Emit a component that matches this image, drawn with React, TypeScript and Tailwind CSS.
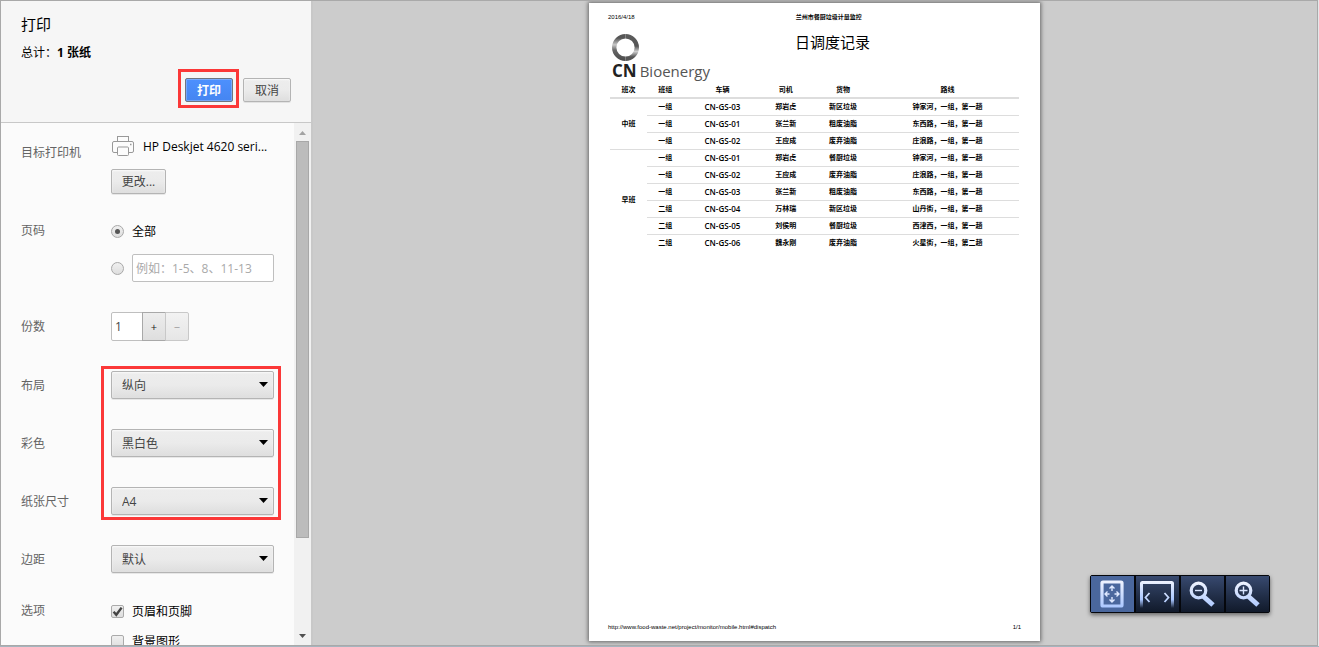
import React, { useState } from "react";

const FACE =
  "bg-linear-to-b from-[#ededed] via-[#ebebeb] to-[#dedede] border border-[#b4b4b4] rounded-[2px] text-[#444] shadow-[0_1px_0_rgba(0,0,0,0.08),inset_0_1px_2px_rgba(255,255,255,0.75)]";

function Field({
  label,
  htmlFor,
  children,
  labelClass = "leading-[30px]",
}: {
  label: string;
  htmlFor?: string;
  children: React.ReactNode;
  labelClass?: string;
}) {
  return (
    <div className="flex items-start">
      <label htmlFor={htmlFor} className={`-mb-1 w-[90px] shrink-0 text-[#646464] ${labelClass}`}>
        {label}
      </label>
      <div className="min-w-0 flex-1">{children}</div>
    </div>
  );
}

function SelectField({ id, label, options }: { id: string; label: string; options: string[] }) {
  return (
    <Field label={label} htmlFor={id}>
      <div className="relative">
        <select id={id} className={`block h-[28px] w-full appearance-none pt-[2px] pr-6 pl-[10px] ${FACE}`}>
          {options.map((o) => (
            <option key={o}>{o}</option>
          ))}
        </select>
        <svg
          viewBox="0 0 9 5"
          className="pointer-events-none absolute top-[11px] right-[6px] h-[5px] w-[9px]"
        >
          <path d="M0 0h9L4.5 5z" fill="#000" />
        </svg>
      </div>
    </Field>
  );
}

function Radio({ id, checked, onChange, label }: { id: string; checked: boolean; onChange: () => void; label?: string }) {
  return (
    <input
      type="radio"
      id={id}
      name="pages"
      aria-label={label}
      checked={checked}
      onChange={onChange}
      className="flex size-[13px] shrink-0 appearance-none items-center justify-center rounded-full border border-[#a8a8a8] bg-linear-to-b from-[#f0f0f0] to-[#dedede] checked:before:size-[5px] checked:before:rounded-full checked:before:bg-[#555] checked:before:content-['']"
    />
  );
}

function Check({ id, label, defaultChecked }: { id: string; label: string; defaultChecked?: boolean }) {
  return (
    <div className="flex h-4 items-center">
      <span className="relative flex size-[13px] shrink-0">
        <input
          type="checkbox"
          id={id}
          defaultChecked={defaultChecked}
          className="peer size-[13px] appearance-none rounded-[2px] border border-[#aaa] bg-linear-to-b from-[#f0f0f0] to-[#dedede]"
        />
        <svg
          viewBox="0 0 13 13"
          className="pointer-events-none absolute inset-0 hidden size-[13px] peer-checked:block"
          fill="none"
        >
          <path d="M2.6 6.8l2.7 3L10.6 2.6" stroke="#444" strokeWidth="2.4" />
        </svg>
      </span>
      <label htmlFor={id} className="pt-px pl-2">
        {label}
      </label>
    </div>
  );
}

function PrinterIcon() {
  return (
    <svg viewBox="0 0 24 22" className="h-[22px] w-6 shrink-0" fill="#fcfcfc" stroke="#999">
      <rect x="6.5" y="1.5" width="11" height="6" />
      <rect x="1.5" y="6.5" width="21" height="11" rx="1.5" />
      <rect x="6.5" y="12" width="11" height="8.500" rx="1" />
      <path d="M19 9.500h1.500" strokeWidth="1.500" />
    </svg>
  );
}

function Sidebar() {
  const [all, setAll] = useState(true);
  const [copies, setCopies] = useState(1);
  return (
    <aside className="flex w-[311px] shrink-0 flex-col border-r border-[#c8c8c8] bg-[#fbfbfb]">
      <header className="flex shrink-0 flex-col border-b border-[#c8c8c8] bg-[#f6f6f6] pt-[11px] pr-5 pb-[14px] pl-5">
        <h1 className="text-[15px] leading-6">打印</h1>
        <p className="mt-[5px] leading-6">
          总计：<b>1 张纸</b>
        </p>
        <div className="mt-1 flex items-start justify-end gap-1">
          <span className="border-3 border-[#fb3838] pt-[6px] pr-[3px] pb-[3px] pl-1">
            <button
              type="button"
              className="block h-[24px] w-[48px] rounded-[2px] border border-[#6f7580] bg-linear-to-b from-[#4d90fe] to-[#4585f1] pt-px font-bold text-white shadow-[inset_0_0_0_1px_rgba(255,255,255,0.25)]"
            >
              打印
            </button>
          </span>
          <button type="button" className={`mt-[9px] h-[24px] w-[48px] pt-px ${FACE}`}>
            取消
          </button>
        </div>
      </header>

      <div className="flex min-h-0 flex-1">
        <form className="flex min-w-0 flex-1 flex-col gap-[30px] overflow-hidden pt-[11px] pr-5 pl-5">
          <Field label="目标打印机" htmlFor="change" labelClass="pt-[7px] leading-6">
            <div className="flex h-6 items-center gap-2">
              <PrinterIcon />
              <span className="pt-px whitespace-nowrap text-black">HP Deskjet 4620 seri...</span>
            </div>
            <button type="button" id="change" className={`mt-[11px] h-[25px] w-[55px] ${FACE}`}>
              更改...
            </button>
          </Field>

          <Field label="页码" htmlFor="pages-range-text" labelClass="leading-[14px]">
            <div className="flex h-[14px] items-center gap-2">
              <Radio id="pages-all" checked={all} onChange={() => setAll(true)} />
              <label htmlFor="pages-all" className="pt-px">
                全部
              </label>
            </div>
            <div className="mt-4 flex items-center gap-2">
              <Radio id="pages-range" label="指定页码" checked={!all} onChange={() => setAll(false)} />
              <input
                id="pages-range-text"
                type="text"
                placeholder="例如：1-5、8、11-13"
                className="h-[28px] w-full min-w-0 rounded-[2px] border border-[#bfbfbf] bg-white px-[3px] placeholder:text-[#a9a9a9]"
              />
            </div>
          </Field>

          <Field label="份数" htmlFor="copies">
            <div className="flex h-[29px]">
              <input
                id="copies"
                type="text"
                value={copies}
                onChange={(e) => setCopies(Number(e.target.value) || 1)}
                className="w-8 rounded-l-[2px] border border-[#bfbfbf] bg-white px-[3px] text-[#444]"
              />
              <button
                type="button"
                aria-label="增加份数"
                onClick={() => setCopies(copies + 1)}
                className="-ml-px w-6 border border-[#a8a8a8] bg-linear-to-b from-[#ededed] to-[#dedede] pt-px text-[11px] text-[#222]"
              >
                +
              </button>
              <button
                type="button"
                aria-label="减少份数"
                disabled={copies === 1}
                onClick={() => setCopies(copies - 1)}
                className="-ml-px w-6 rounded-r-[2px] border border-[#c8c8c8] bg-linear-to-b from-[#f2f2f2] to-[#e6e6e6] text-[#444] disabled:text-[#aaa]"
              >
                –
              </button>
            </div>
          </Field>

          <div className="relative flex flex-col gap-[30px]">
            <SelectField id="layout" label="布局" options={["纵向", "横向"]} />
            <SelectField id="color" label="彩色" options={["黑白色", "彩色"]} />
            <SelectField id="paper" label="纸张尺寸" options={["A4", "A3"]} />
            <div className="pointer-events-none absolute -top-[5px] -right-[7px] -bottom-[5px] left-[80px] border-3 border-[#fb3838]" />
          </div>

          <SelectField id="margin" label="边距" options={["默认", "无"]} />

          <Field label="选项" htmlFor="header-footer" labelClass="leading-4">
            <div className="flex flex-col gap-[14px]">
              <Check id="header-footer" label="页眉和页脚" defaultChecked />
              <Check id="background" label="背景图形" />
            </div>
          </Field>
        </form>

        <div className="flex w-[17px] shrink-0 flex-col items-center bg-[#f1f1f1]" aria-hidden="true">
          <svg viewBox="0 0 17 18" className="h-[18px] w-[17px]">
            <path d="M5 12h7L8.500 8z" fill="#a3a3a3" />
          </svg>
          <div className="w-[13px] flex-[397] border border-[#a8a8a8] bg-[#bcbcbc]" />
          <div className="flex-[89]" />
          <svg viewBox="0 0 17 18" className="h-[18px] w-[17px]">
            <path d="M5 7h7L8.500 11z" fill="#505050" />
          </svg>
        </div>
      </div>
    </aside>
  );
}

type Trip = { team: string; car: string; driver: string; cargo: string; route: string };

const SHIFTS: { name: string; trips: Trip[] }[] = [
  {
    name: "中班",
    trips: [
      { team: "一组", car: "CN-GS-03", driver: "郑岩虎", cargo: "新区垃圾", route: "钟家河，一组，第一趟" },
      { team: "一组", car: "CN-GS-01", driver: "张兰新", cargo: "粗废油脂", route: "东西路，一组，第一趟" },
      { team: "一组", car: "CN-GS-02", driver: "王应成", cargo: "废弃油脂", route: "庄浪路，一组，第一趟" },
    ],
  },
  {
    name: "早班",
    trips: [
      { team: "一组", car: "CN-GS-01", driver: "郑岩虎", cargo: "餐厨垃圾", route: "钟家河，一组，第一趟" },
      { team: "一组", car: "CN-GS-02", driver: "王应成", cargo: "废弃油脂", route: "庄浪路，一组，第一趟" },
      { team: "一组", car: "CN-GS-03", driver: "张兰新", cargo: "粗废油脂", route: "东西路，一组，第一趟" },
      { team: "二组", car: "CN-GS-04", driver: "万林瑞", cargo: "新区垃圾", route: "山丹街，一组，第一趟" },
      { team: "二组", car: "CN-GS-05", driver: "刘侯明", cargo: "餐厨垃圾", route: "西津西，一组，第一趟" },
      { team: "二组", car: "CN-GS-06", driver: "魏永刚", cargo: "废弃油脂", route: "火星街，一组，第二趟" },
    ],
  },
];

function Logo() {
  return (
    <div className="pl-1 text-[#4a4a4a]">
      <svg viewBox="0 0 27 27" className="block size-[27px]" fill="none">
        <defs>
          <linearGradient id="ringLeft" x1="0" y1="0" x2="0" y2="27" gradientUnits="userSpaceOnUse">
            <stop offset="0.15" stopColor="#555" />
            <stop offset="0.4" stopColor="#c9c9c9" />
            <stop offset="0.6" stopColor="#666" />
            <stop offset="1" stopColor="#4a4a4a" />
          </linearGradient>
          <linearGradient id="ringRight" x1="0" y1="0" x2="0" y2="27" gradientUnits="userSpaceOnUse">
            <stop offset="0" stopColor="#5c5c5c" />
            <stop offset="0.45" stopColor="#555" />
            <stop offset="0.65" stopColor="#cfcfcf" />
            <stop offset="0.85" stopColor="#555" />
          </linearGradient>
        </defs>
        <path d="M13.500 2.200A11.300 11.300 0 0 0 13.500 24.800" stroke="url(#ringLeft)" strokeWidth="4.400" />
        <path d="M13.500 2.200A11.300 11.300 0 0 1 13.500 24.800" stroke="url(#ringRight)" strokeWidth="4.400" />
      </svg>
      <div className="flex items-baseline gap-[3px] leading-5">
        <span className="text-[17px] font-bold text-[#222]">CN</span>
        <span className="text-[15px] font-medium text-[#555]">Bioenergy</span>
      </div>
    </div>
  );
}

function Sheet() {
  return (
    <article className="flex w-[451px] flex-col bg-white px-[19px] pt-[9px] pb-[9px] text-black shadow-[0_0_4px_1px_rgba(0,0,0,0.5)]">
      <div className="grid grid-cols-3 font-['Liberation_Sans','Noto_Sans_CJK_SC',sans-serif] text-[6px] leading-[10px] font-semibold">
        <span className="font-normal">2016/4/18</span>
        <span className="pl-[50px] whitespace-nowrap">兰州市餐厨垃圾计量监控</span>
      </div>
      <div className="mt-3 grid grid-cols-[1fr_auto_1fr]">
        <Logo />
        <h2 className="pl-[36px] text-[15px] leading-4">日调度记录</h2>
      </div>
      <div className="px-[2px]">
        <table className="w-full table-fixed border-collapse text-center text-[7px] font-semibold">
          <colgroup>
            <col className="w-[9%]" />
            <col className="w-[9%]" />
            <col className="w-[19%]" />
            <col className="w-[12%]" />
            <col className="w-[16%]" />
            <col className="w-[35%]" />
          </colgroup>
          <thead>
            <tr className="h-[17px] border-b-2 border-[#ddd]">
              {["班次", "班组", "车辆", "司机", "货物", "路线"].map((h) => (
                <th key={h} className="p-0 pt-[2px] leading-3 font-bold">
                  {h}
                </th>
              ))}
            </tr>
          </thead>
          <tbody>
            {SHIFTS.map((shift, s) =>
              shift.trips.map((t, i) => (
                <tr key={t.car} className="h-[17px]">
                  {i === 0 && (
                    <td rowSpan={shift.trips.length} className={s > 0 ? "border-t border-[#ddd] p-0" : "p-0"}>
                      {shift.name}
                    </td>
                  )}
                  {[t.team, t.car, t.driver, t.cargo, t.route].map((c, k) => (
                    <td
                      key={k}
                      className={`p-0 leading-[14px] ${k === 1 ? "text-[8px]" : ""} ${
                        s + i > 0 ? "border-t border-[#ddd]" : ""
                      }`}
                    >
                      {c}
                    </td>
                  ))}
                </tr>
              ))
            )}
          </tbody>
        </table>
      </div>
      <div className="mt-auto flex justify-between font-['Liberation_Sans',sans-serif] text-[6px] leading-[10px]">
        <span>http://www.food-waste.net/project/monitor/mobile.html#dispatch</span>
        <span>1/1</span>
      </div>
    </article>
  );
}

function ToolButton({ label, active, children }: { label: string; active?: boolean; children: React.ReactNode }) {
  return (
    <button
      type="button"
      aria-label={label}
      className={`flex h-9 flex-1 items-center justify-center pr-[2px] ${
        active ? "bg-[#4a679d]" : "bg-linear-to-b from-[#384a70] to-[#111a2b]"
      }`}
    >
      {children}
    </button>
  );
}

function Toolbar() {
  return (
    <div className="absolute right-[47px] bottom-[32px] flex w-[180px] gap-[2px] rounded-[2px] border border-[#05070c] bg-[#05070c] shadow-[0_2px_4px_rgba(0,0,0,0.5)]">
      <svg width="0" height="0" className="absolute">
        <defs>
          <linearGradient id="ice" x1="0" y1="0" x2="0" y2="28" gradientUnits="userSpaceOnUse">
            <stop offset="0" stopColor="#f2f5ff" />
            <stop offset="1" stopColor="#a9c6ff" />
          </linearGradient>
          <linearGradient id="iceFade" x1="0" y1="0" x2="0" y2="28" gradientUnits="userSpaceOnUse">
            <stop offset="0" stopColor="#f2f5ff" />
            <stop offset="0.7" stopColor="#a9c6ff" />
            <stop offset="1" stopColor="#a9c6ff" stopOpacity="0" />
          </linearGradient>
        </defs>
      </svg>
      <ToolButton label="适合页面" active>
        <svg viewBox="0 0 24 28" className="h-[28px] w-6" fill="none">
          <rect x="2" y="2" width="20" height="24" rx="1" stroke="url(#ice)" strokeWidth="3.200" />
          <path
            d="M12 11V6.500M9.500 8.500L12 6l2.500 2.500M12 17v4.500M9.500 19.500L12 22l2.500-2.500M9.500 14H5.500M7.500 11.500L5 14l2.500 2.500M14.500 14h4M16.500 11.500L19 14l-2.500 2.500"
            stroke="#dfe9ff"
            strokeWidth="1.400"
          />
        </svg>
      </ToolButton>
      <ToolButton label="适合宽度">
        <svg viewBox="0 0 34 28" className="h-[28px] w-[34px]" fill="none">
          <path d="M1.500 28V3.500q0-1 1-1h29q1 0 1 1V28" stroke="url(#iceFade)" strokeWidth="3" />
          <path d="M9.500 13l-4 4.500 4 4.500M24.500 13l4 4.500-4 4.500" stroke="url(#ice)" strokeWidth="1.800" />
        </svg>
      </ToolButton>
      <ToolButton label="缩小">
        <svg viewBox="0 0 26 26" className="size-[26px]" fill="none">
          <path d="M14.500 15.500L24 24" stroke="url(#ice)" strokeWidth="5" />
          <circle cx="9.500" cy="9.500" r="7.300" stroke="url(#ice)" strokeWidth="3.200" />
          <path d="M6 8.800h7v1.400H6z" fill="url(#ice)" />
        </svg>
      </ToolButton>
      <ToolButton label="放大">
        <svg viewBox="0 0 26 26" className="size-[26px]" fill="none">
          <path d="M14.500 15.500L24 24" stroke="url(#ice)" strokeWidth="5" />
          <circle cx="9.500" cy="9.500" r="7.300" stroke="url(#ice)" strokeWidth="3.200" />
          <path d="M5.500 8.800h8v1.400h-8zM8.800 5.500h1.400v8H8.800z" fill="url(#ice)" />
        </svg>
      </ToolButton>
    </div>
  );
}

export default function App() {
  return (
    <div className="h-screen border-b border-[#a5b4be] bg-[#e4e8ea] pr-px font-['Open_Sans','Noto_Sans_CJK_SC',sans-serif] text-[12px] text-black">
      <div className="flex h-full border border-[#a9a9a9]">
        <Sidebar />
        <main className="relative flex flex-1 justify-center overflow-hidden border-l border-[#c8c8c8] bg-[#ccc] pt-[2px] pr-px pb-[4px]">
          <Sheet />
          <Toolbar />
        </main>
      </div>
    </div>
  );
}
